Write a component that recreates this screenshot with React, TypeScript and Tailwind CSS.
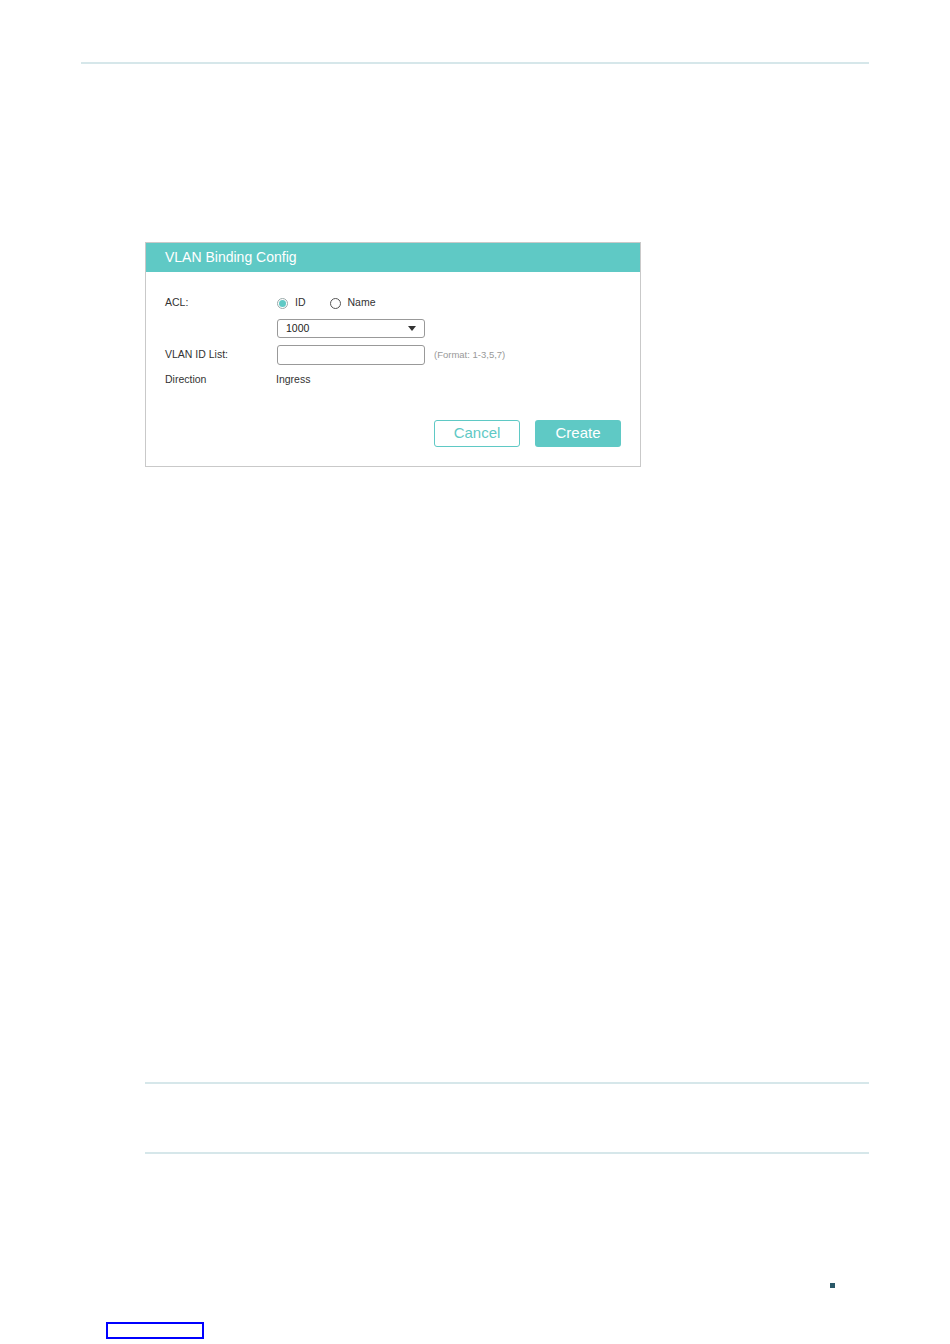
import React from "react";

export default function App() {
  return (
    <div className="relative w-[950px] h-[1344px] bg-white overflow-hidden" style={{ fontFamily: "'Liberation Sans', Arial, sans-serif" }}>
      <div className="flex flex-col">
        <div className="mt-[62px] ml-[81px] w-[788px] h-[2px] bg-[#d6e7ea]" />
        <div className="mt-[178px] ml-[145px] w-[496px] h-[225px] border border-[#c9c9c9] flex flex-col">
          <div className="h-[29px] bg-[#5fc9c5] flex items-center pl-[19px] text-white text-[14px]">VLAN Binding Config</div>
          <div className="flex flex-col pl-[19px] pr-[19px]">
            <div className="mt-[22px] h-[18px] flex items-center text-[10.5px] text-[#333]">
              <div className="w-[112px]">ACL:</div>
              <div className="flex items-center">
                <span className="w-[11px] h-[11px] rounded-full border border-[#9aa] flex items-center justify-center">
                  <span className="w-[7px] h-[7px] rounded-full bg-[#5fc9c5]" />
                </span>
                <span className="ml-[7px]">ID</span>
                <span className="ml-[24px] w-[11px] h-[11px] rounded-full border border-[#555]" />
                <span className="ml-[7px]">Name</span>
              </div>
            </div>
            <div className="mt-[7px] flex items-center">
              <div className="w-[112px]" />
              <div className="w-[148px] h-[19px] border border-[#999] rounded-[3px] flex items-center justify-between pl-[8px] pr-[8px] text-[10.5px] text-[#222]">
                <span>1000</span>
                <svg width="8" height="5" viewBox="0 0 8 5"><path d="M0 0h8L4 5z" fill="#333" /></svg>
              </div>
            </div>
            <div className="mt-[7px] flex items-center text-[10.5px] text-[#333]">
              <div className="w-[112px]">VLAN ID List:</div>
              <div className="w-[148px] h-[20px] border border-[#999] rounded-[3px]" />
              <div className="ml-[9px] text-[9.5px] text-[#999]">(Format: 1-3,5,7)</div>
            </div>
            <div className="mt-[7px] h-[16px] flex items-center text-[10.5px] text-[#333]">
              <div className="w-[111px]">Direction</div>
              <div>Ingress</div>
            </div>
            <div className="mt-[32px] flex justify-end pr-[0px]">
              <button className="w-[86px] h-[27px] border border-[#5fc9c5] rounded-[3px] bg-white text-[#5fc9c5] text-[15px]">Cancel</button>
              <button className="ml-[15px] w-[86px] h-[27px] rounded-[3px] bg-[#5fc9c5] text-white text-[15px]">Create</button>
            </div>
          </div>
        </div>
        <div className="mt-[615px] ml-[145px] w-[724px] h-[2px] bg-[#d6e7ea]" />
        <div className="mt-[68px] ml-[145px] w-[724px] h-[2px] bg-[#d6e7ea]" />
        <div className="mt-[129px] ml-[830px] w-[5px] h-[5px] bg-[#2a5868]" />
        <div className="mt-[34px] ml-[106px] w-[98px] h-[17px] border-2 border-[#0000ff]" />
      </div>
    </div>
  );
}
